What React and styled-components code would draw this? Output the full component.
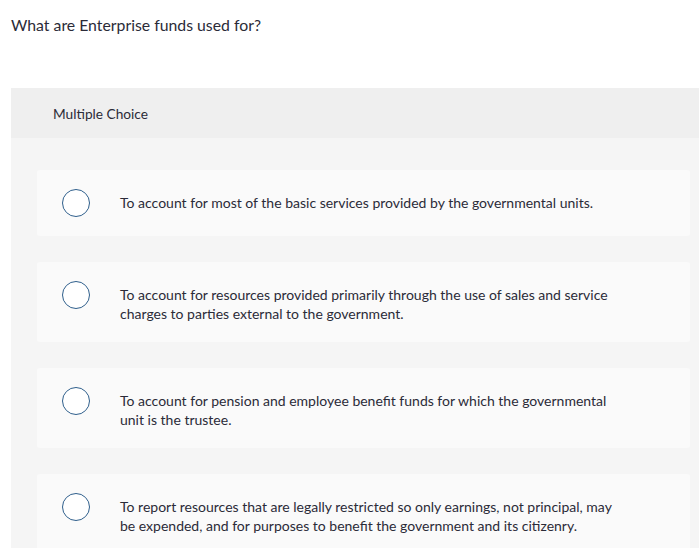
import React from "react";
import styled, { createGlobalStyle } from "styled-components";

const GlobalStyle = createGlobalStyle`
  body {
    margin: 0;
    background: #fff;
    font-family: Lato, "Open Sans", sans-serif;
    color: #2b2b38;
    overflow: hidden;
  }
`;

const Page = styled.div`
  padding: 15px 0 0 11px;
`;

const Question = styled.p`
  margin: 0;
  font-size: 15.8px;
  line-height: 20px;
  color: #2b2b38;
`;

const Panel = styled.section`
  margin-top: 53px;
  width: 705px;
  background: #f5f5f5;
`;

const PanelHeader = styled.div`
  height: 50px;
  display: flex;
  align-items: center;
  padding-left: 42px;
  background: #efefef;
  font-size: 13.7px;
  color: #2b2b38;
`;

const OptionList = styled.div`
  display: flex;
  flex-direction: column;
  gap: 26px;
  padding: 32px 26px 26px;
`;

const Option = styled.label`
  display: flex;
  align-items: flex-start;
  padding: 19px 0 19px 25px;
  background: #fafafa;
  border-radius: 3px;
  cursor: pointer;
`;

const Radio = styled.span`
  flex: none;
  width: 28px;
  height: 28px;
  box-sizing: border-box;
  border: 1.5px solid #2f5f8c;
  border-radius: 50%;
  background: #fff;
`;

const OptionText = styled.span`
  margin: 4px 0 0 30px;
  max-width: 500px;
  font-size: 14px;
  line-height: 19px;
  color: #2b2b38;
`;

const options = [
  "To account for most of the basic services provided by the governmental units.",
  "To account for resources provided primarily through the use of sales and service charges to parties external to the government.",
  "To account for pension and employee benefit funds for which the governmental unit is the trustee.",
  "To report resources that are legally restricted so only earnings, not principal, may be expended, and for purposes to benefit the government and its citizenry.",
];

export default function App() {
  return (
    <Page>
      <GlobalStyle />
      <Question>What are Enterprise funds used for?</Question>
      <Panel>
        <PanelHeader>Multiple Choice</PanelHeader>
        <OptionList>
          {options.map((text) => (
            <Option key={text}>
              <Radio />
              <OptionText>{text}</OptionText>
            </Option>
          ))}
        </OptionList>
      </Panel>
    </Page>
  );
}
